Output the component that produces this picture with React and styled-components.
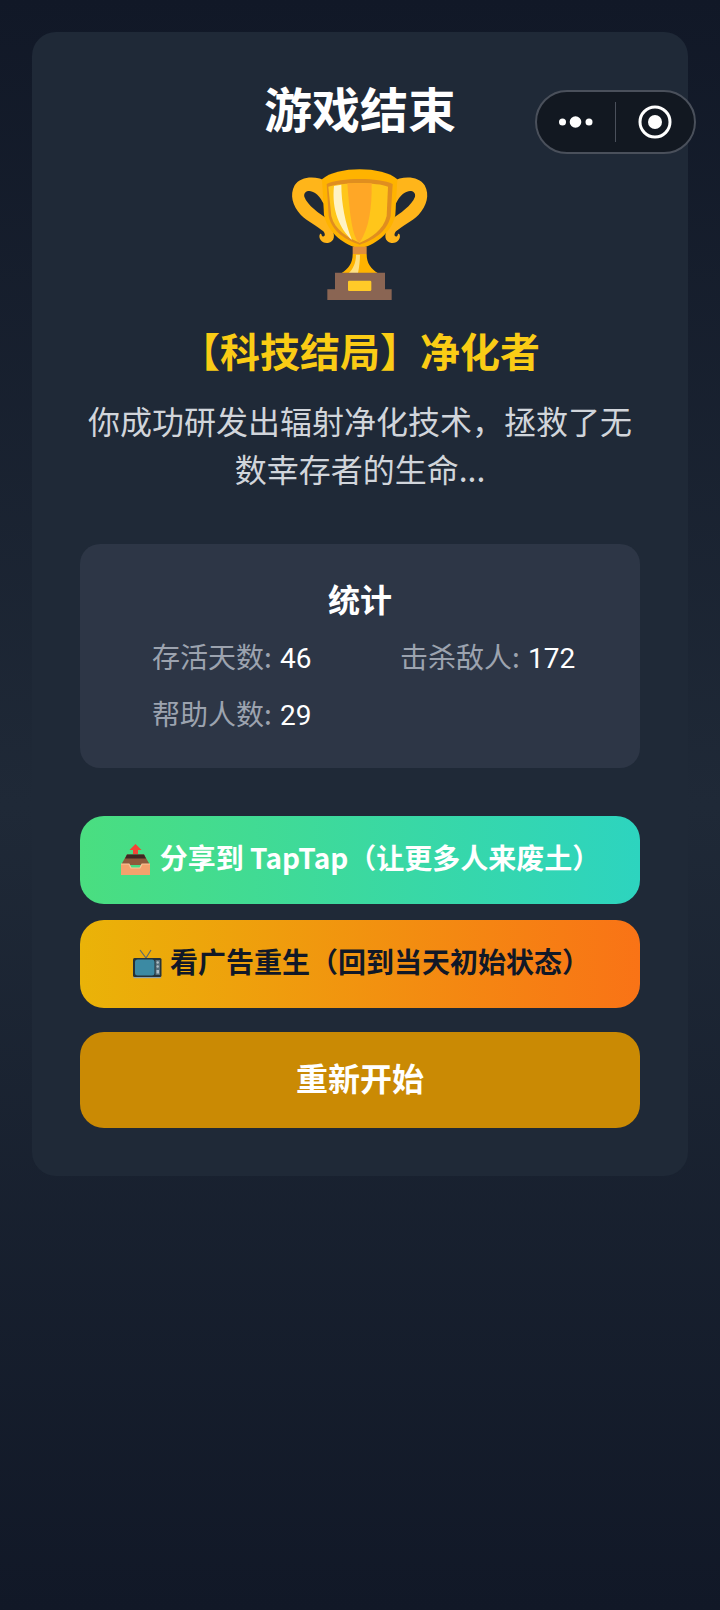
import styled, { createGlobalStyle } from "styled-components";

const GlobalStyle = createGlobalStyle`
  html, body {
    margin: 0;
    padding: 0;
    background: #111827;
  }
  * {
    box-sizing: border-box;
  }
`;

const Page = styled.div`
  position: relative;
  min-height: 1610px;
  padding: 32px;
  background: linear-gradient(to bottom, #111827, #1f2937 50%, #111827);
  font-family: "Noto Sans CJK SC", "Roboto", sans-serif;
  color: #fff;
`;

const Capsule = styled.div`
  position: absolute;
  top: 90px;
  left: 535px;
  width: 161px;
  height: 64px;
  display: flex;
  align-items: center;
  border: 2px solid #4a505b;
  border-radius: 32px;
  background: #121821;
`;

const CapsuleSide = styled.div`
  flex: 1;
  display: flex;
  align-items: center;
  justify-content: center;
`;

const CapsuleDivider = styled.div`
  width: 1px;
  height: 40px;
  background: #4a505b;
`;

const Card = styled.div`
  display: flex;
  flex-direction: column;
  padding: 48px;
  border-radius: 24px;
  background: #1f2937;
`;

const Title = styled.h1`
  margin: 0;
  font-size: 48px;
  line-height: 54px;
  font-weight: 700;
  text-align: center;
`;

const TrophyWrap = styled.div`
  display: flex;
  justify-content: center;
  margin-top: 26px;
`;

const Ending = styled.h2`
  margin: 10px 0 0;
  font-size: 40px;
  line-height: 60px;
  font-weight: 700;
  text-align: center;
  color: #facc15;
`;

const Description = styled.p`
  margin: 16px 0 0;
  font-size: 32px;
  line-height: 48px;
  text-align: center;
  color: #d1d5db;
`;

const StatsPanel = styled.div`
  height: 224px;
  margin-top: 52px;
  padding: 30px 32px 0;
  border-radius: 20px;
  background: #2d3646;
`;

const StatsTitle = styled.h3`
  margin: 0;
  font-size: 32px;
  line-height: 48px;
  font-weight: 700;
  text-align: center;
`;

const StatsGrid = styled.div`
  display: grid;
  grid-template-columns: 248px 1fr;
  grid-auto-rows: 40px;
  row-gap: 17px;
  margin-top: 14px;
  padding-left: 40px;
`;

const Stat = styled.div`
  font-size: 28px;
  line-height: 40px;
  color: #9ca3af;
`;

const StatValue = styled.span`
  margin-left: 2px;
  font-family: "Roboto", sans-serif;
  color: #fff;
`;

const Actions = styled.div`
  display: flex;
  flex-direction: column;
  margin-top: 48px;
`;

const ActionButton = styled.button`
  display: flex;
  align-items: center;
  justify-content: center;
  gap: 8px;
  width: 100%;
  height: ${(p) => p.$height}px;
  margin-top: ${(p) => p.$top}px;
  padding: 0 0 6px;
  border: none;
  border-radius: 24px;
  background: ${(p) => p.$background};
  color: ${(p) => p.$color};
  font-family: inherit;
  font-size: ${(p) => p.$size}px;
  font-weight: 700;
`;

const IconSlot = styled.span`
  display: flex;
  margin-top: 6px;
`;

const handle =
  "M172 66C140 46 92 48 74 76C58 105 68 138 92 164C112 184 142 198 160 214C168 224 164 232 157 229C153 225 156 219 150 222C143 234 157 252 174 249C194 246 198 222 182 204L174 178C148 160 112 136 103 110C100 96 114 90 127 95C142 100 152 114 160 130L176 130Z";

const TrophyIcon = () => (
  <svg width="180" height="150" viewBox="0 0 540 450">
    <path d={handle} fill="#ffb51a" />
    <path d={handle} fill="#ffb51a" transform="matrix(-1 0 0 1 538 0)" />
    <path d="M156 58C200 18 338 18 382 58L376 165C364 222 312 256 269 266C226 256 174 222 162 165Z" fill="#ffb300" />
    <path d="M170 72C210 52 328 52 368 72L362 168C352 217 306 242 269 254C232 242 186 217 176 168Z" fill="#e08e1f" />
    <path d="M175 80C215 66 323 66 354 80L350 168C340 210 304 234 269 248C234 234 194 210 184 168Z" fill="#ffc61a" />
    <path d="M232 70H305C306 140 298 205 269 248C250 240 240 180 232 70Z" fill="#ffa726" />
    <path d="M192 78L214 74C214 130 226 190 246 240C210 208 184 150 192 78Z" fill="#fff3c4" />
    <path d="M248 260H290V282H248Z" fill="#e08e3c" />
    <path d="M248 282C248 310 236 325 214 340H324C302 325 290 310 290 282Z" fill="#ffb300" />
    <path d="M258 284C258 310 248 328 236 340H264C268 320 270 300 270 284Z" fill="#ffe082" />
    <path d="M195 338H345V388H365V420H172V388H195Z" fill="#8a6553" />
    <rect x="234" y="362" width="70" height="31" rx="4" fill="#ffca28" />
  </svg>
);

const OutboxIcon = () => (
  <svg width="32" height="32" viewBox="0 0 32 32">
    <path d="M15.5 0L21.5 6H18V10H13V6H9.5Z" fill="#f44336" />
    <path d="M7 10.5H24L30 21H1Z" fill="#8d5a3c" />
    <path d="M7 10.5H24L26 14.5H5Z" fill="#3e2723" />
    <path d="M1 20H9L11 24H20L22 20H30V31H1Z" fill="#f4a26d" />
    <path d="M1 20H9L11 24H20L22 20H30" fill="none" stroke="#fbc59a" strokeWidth="1.2" />
  </svg>
);

const TvIcon = () => (
  <svg width="32" height="30" viewBox="0 0 32 30">
    <path d="M16 9L10 1M16 9L21 1" stroke="#5d6a70" strokeWidth="1.2" fill="none" />
    <rect x="3" y="9" width="28.5" height="19" rx="1.5" fill="#263238" />
    <rect x="5" y="10.5" width="19.5" height="16" rx="2.5" fill="#3c8aa3" />
    <rect x="25.5" y="11" width="4.5" height="15" fill="#546e7a" />
    <circle cx="27.7" cy="13.5" r="1.2" fill="#b0bec5" />
    <circle cx="27.7" cy="17.5" r="1.2" fill="#b0bec5" />
    <rect x="26.5" y="21" width="2.5" height="3.5" fill="#b0bec5" />
    <rect x="3.5" y="28" width="27.5" height="1.2" fill="#8fa3ad" />
  </svg>
);

const App = () => {
  return (
    <Page>
      <GlobalStyle />
      <Card>
        <Title>游戏结束</Title>
        <TrophyWrap>
          <TrophyIcon />
        </TrophyWrap>
        <Ending>【科技结局】净化者</Ending>
        <Description>你成功研发出辐射净化技术，拯救了无数幸存者的生命...</Description>
        <StatsPanel>
          <StatsTitle>统计</StatsTitle>
          <StatsGrid>
            <Stat>
              存活天数: <StatValue>46</StatValue>
            </Stat>
            <Stat>
              击杀敌人: <StatValue>172</StatValue>
            </Stat>
            <Stat>
              帮助人数: <StatValue>29</StatValue>
            </Stat>
          </StatsGrid>
        </StatsPanel>
        <Actions>
          <ActionButton
            $height={88}
            $top={0}
            $size={28}
            $color="#fff"
            $background="linear-gradient(to right, #4ade80, #2dd4bf)"
          >
            <IconSlot>
              <OutboxIcon />
            </IconSlot>
            分享到 TapTap（让更多人来废土）
          </ActionButton>
          <ActionButton
            $height={88}
            $top={16}
            $size={28}
            $color="#111827"
            $background="linear-gradient(to right, #eab308, #f97316)"
          >
            <IconSlot>
              <TvIcon />
            </IconSlot>
            看广告重生（回到当天初始状态）
          </ActionButton>
          <ActionButton
            $height={96}
            $top={24}
            $size={32}
            $color="#fff"
            $background="#ca8a04"
          >
            重新开始
          </ActionButton>
        </Actions>
      </Card>
      <Capsule>
        <CapsuleSide>
          <svg width="36" height="20" viewBox="0 0 36 20" fill="#fff">
            <circle cx="4.5" cy="10" r="3.5" />
            <circle cx="17.5" cy="10" r="5.8" />
            <circle cx="31" cy="10" r="3.5" />
          </svg>
        </CapsuleSide>
        <CapsuleDivider />
        <CapsuleSide>
          <svg width="36" height="36" viewBox="0 0 36 36" fill="none">
            <circle cx="18" cy="18" r="15" stroke="#fff" strokeWidth="3" />
            <circle cx="18" cy="18" r="7" fill="#fff" />
          </svg>
        </CapsuleSide>
      </Capsule>
    </Page>
  );
};

export default App;
